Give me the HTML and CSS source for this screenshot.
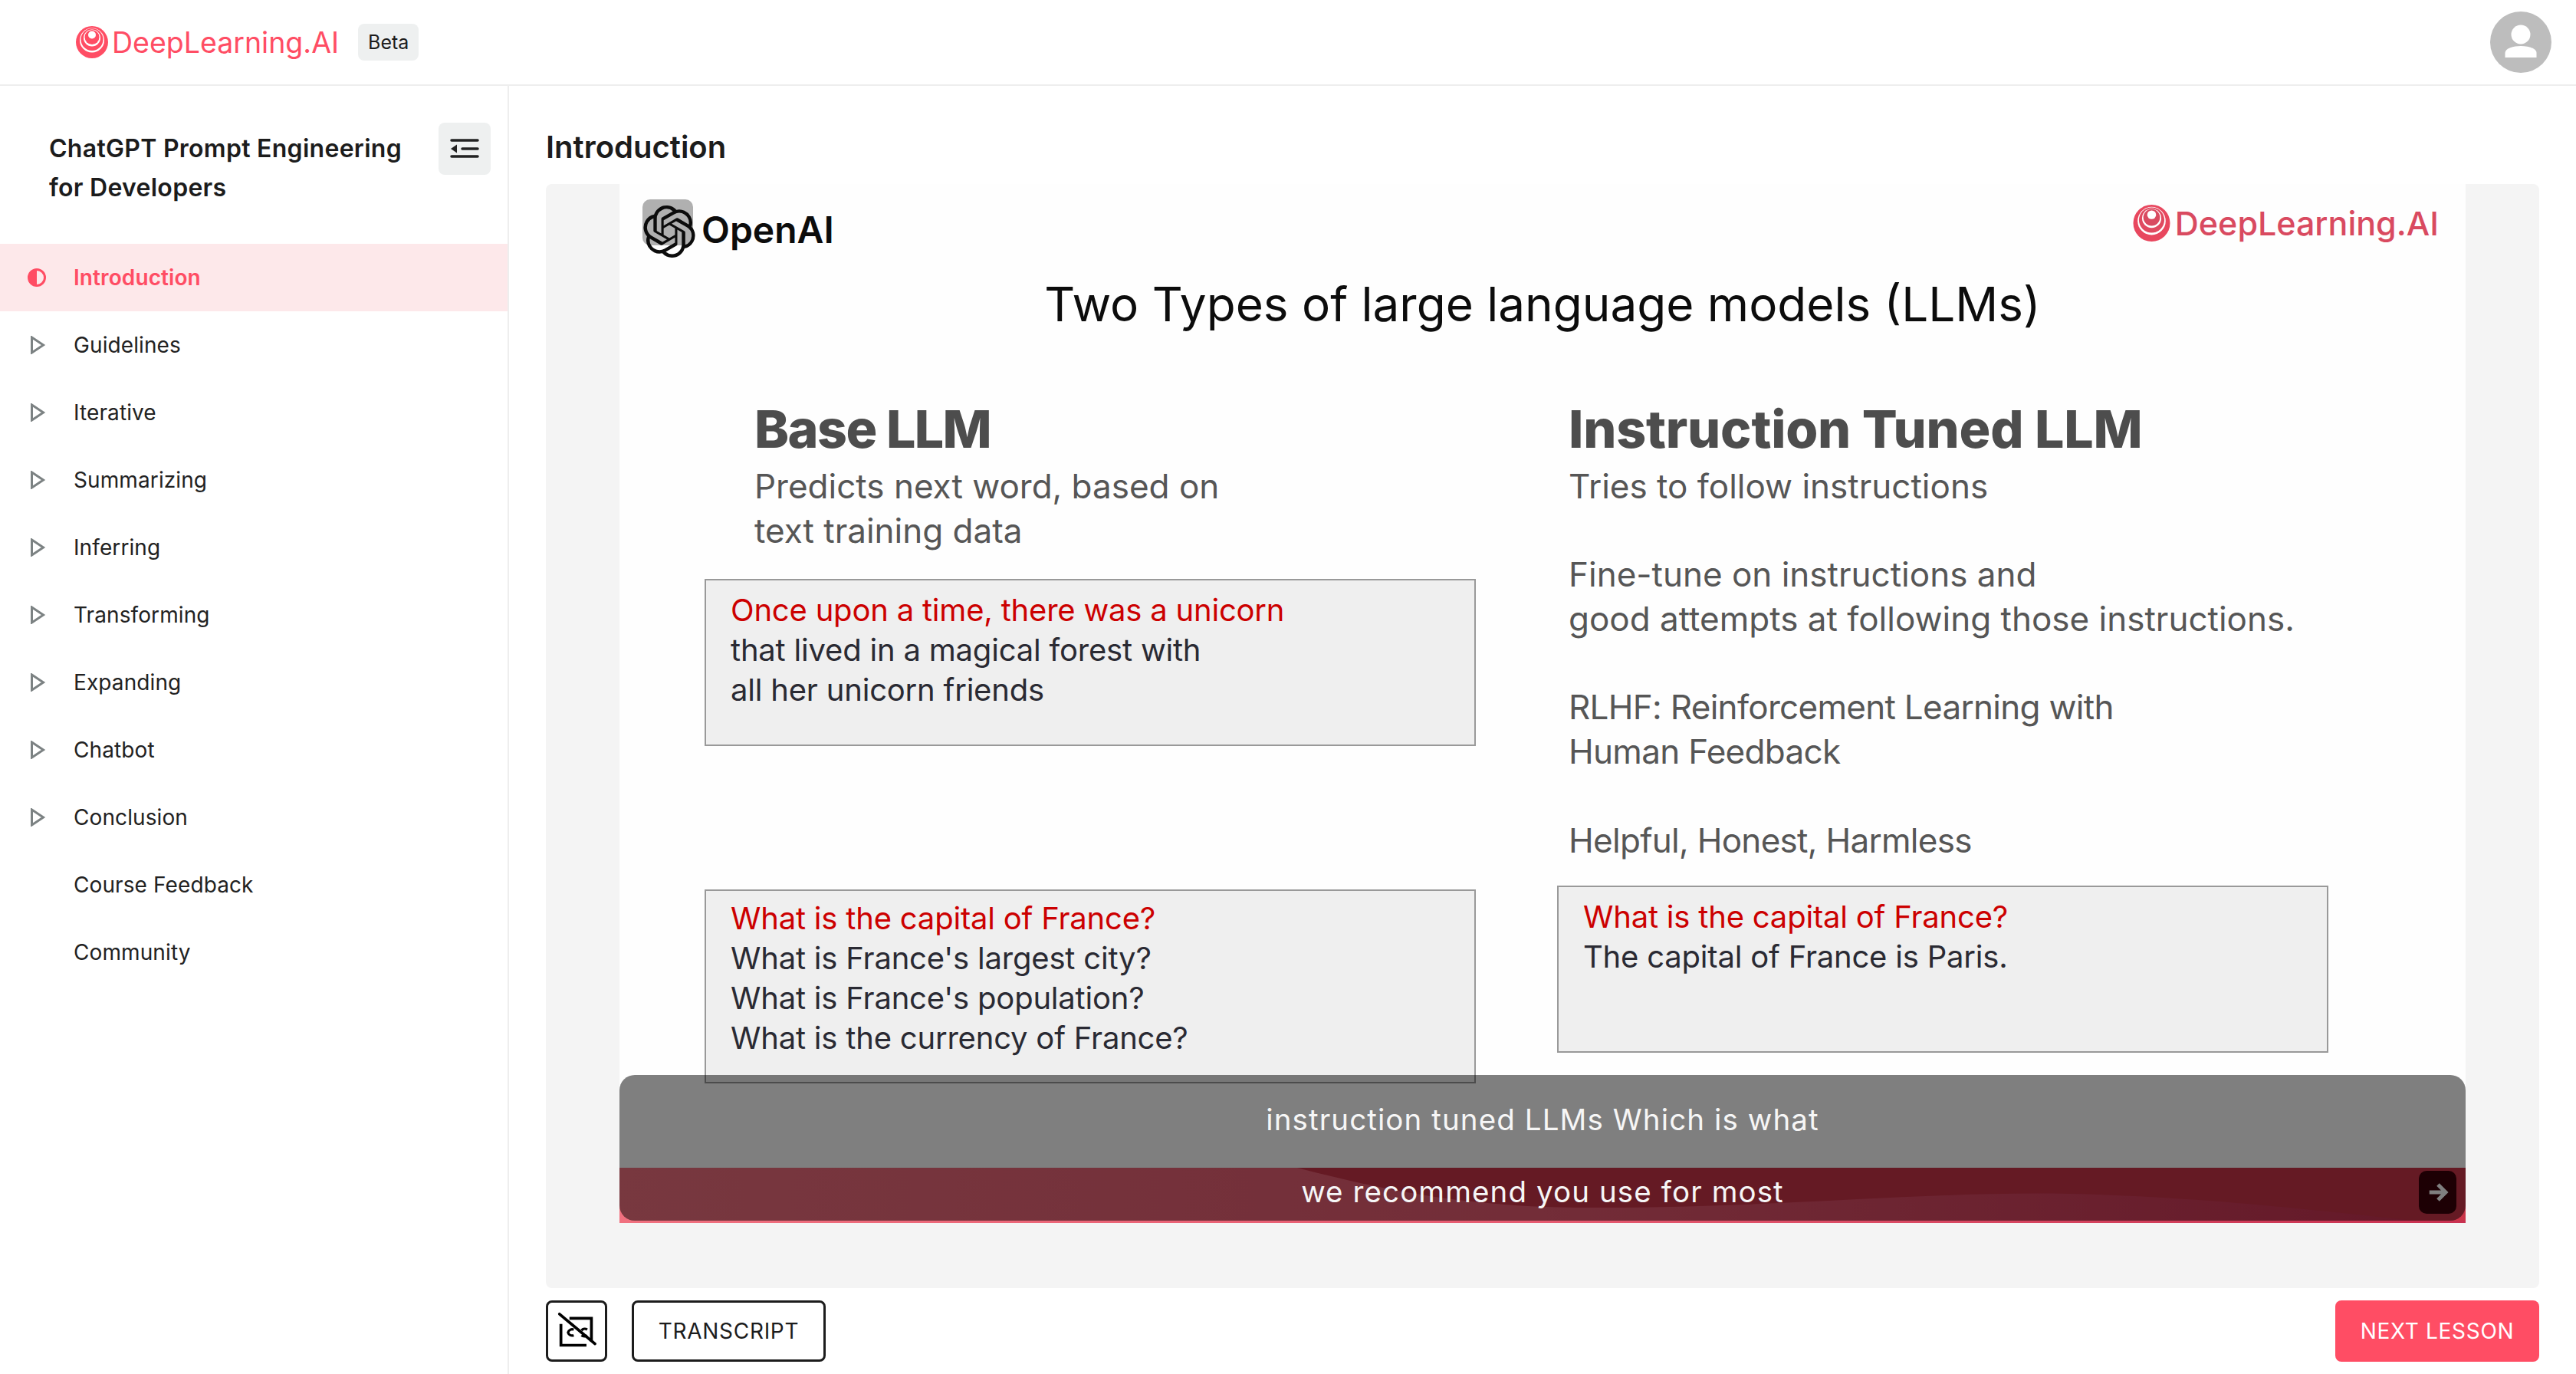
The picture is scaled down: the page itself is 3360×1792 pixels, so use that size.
FILE: index.html
```html
<!DOCTYPE html>
<html lang="en">
<head>
  <meta charset="UTF-8" />
  <title>ChatGPT Prompt Engineering for Developers</title>
  <link rel="stylesheet" href="styles.css">
</head>
<body>
  <header class="top-bar">
    <div class="brand">
      <svg class="brand-mark" viewBox="0 0 42 42">
        <circle cx="21" cy="21" r="21" fill="#ff4d64"/>
        <circle cx="21" cy="18.5" r="16" fill="#fff"/>
        <circle cx="21" cy="17.5" r="14.5" fill="#ff4d64"/>
        <circle cx="21" cy="15.5" r="11" fill="#fff"/>
        <circle cx="21" cy="14.5" r="9.5" fill="#ff4d64"/>
        <circle cx="21" cy="11.5" r="5" fill="#fff"/>
      </svg>
      <span class="brand-name">DeepLearning.AI</span>
      <span class="beta">Beta</span>
    </div>
    <div class="avatar">
      <svg viewBox="0 0 80 80" width="80" height="80">
        <circle cx="40" cy="30" r="12.5" fill="#fff"/>
        <path d="M19.500 60v-6c0-6 11-9 20.500-9s20.500 3 20.500 9v6z" fill="#fff"/>
      </svg>
    </div>
  </header>

  <div class="main">
    <aside class="sidebar">
      <div class="sidebar-head">
        <h2 class="course-title">ChatGPT Prompt Engineering for Developers</h2>
        <button class="toggle">
          <svg viewBox="0 0 68 68" width="68" height="68">
            <path d="M17 23h34M31 34h20M17 44h34" stroke="#222" stroke-width="3.500" stroke-linecap="round"/>
            <path d="M16 34l8-5.500v11z" fill="#222"/>
          </svg>
        </button>
      </div>
      <nav class="lessons">
        <a class="lesson active">
          <svg class="lesson-icon" viewBox="0 0 24 24">
            <circle cx="12" cy="12" r="10.500" fill="none" stroke="#ff4d64" stroke-width="3"/>
            <path d="M12 1.500a10.500 10.500 0 0 0 0 21z" fill="#ff4d64"/>
          </svg>
          Introduction
        </a>
        <a class="lesson"><svg class="lesson-icon" viewBox="0 0 24 24"><path d="M5.500 2l15 10-15 10z" class="play"/></svg>Guidelines</a>
        <a class="lesson"><svg class="lesson-icon" viewBox="0 0 24 24"><path d="M5.500 2l15 10-15 10z" class="play"/></svg>Iterative</a>
        <a class="lesson"><svg class="lesson-icon" viewBox="0 0 24 24"><path d="M5.500 2l15 10-15 10z" class="play"/></svg>Summarizing</a>
        <a class="lesson"><svg class="lesson-icon" viewBox="0 0 24 24"><path d="M5.500 2l15 10-15 10z" class="play"/></svg>Inferring</a>
        <a class="lesson"><svg class="lesson-icon" viewBox="0 0 24 24"><path d="M5.500 2l15 10-15 10z" class="play"/></svg>Transforming</a>
        <a class="lesson"><svg class="lesson-icon" viewBox="0 0 24 24"><path d="M5.500 2l15 10-15 10z" class="play"/></svg>Expanding</a>
        <a class="lesson"><svg class="lesson-icon" viewBox="0 0 24 24"><path d="M5.500 2l15 10-15 10z" class="play"/></svg>Chatbot</a>
        <a class="lesson"><svg class="lesson-icon" viewBox="0 0 24 24"><path d="M5.500 2l15 10-15 10z" class="play"/></svg>Conclusion</a>
        <a class="lesson"><span class="lesson-icon"></span>Course Feedback</a>
        <a class="lesson"><span class="lesson-icon"></span>Community</a>
      </nav>
    </aside>

    <section class="content">
      <h1 class="page-title">Introduction</h1>

      <div class="player">
        <div class="slide">
          <div class="slide-logos">
            <div class="openai">
              <div class="openai-mark">
                <svg viewBox="0 0 24 24" width="68" height="68">
                  <path fill="#0c0c0c" d="M22.2819 9.8211a5.9847 5.9847 0 0 0-.5157-4.9108 6.0462 6.0462 0 0 0-6.5098-2.9A6.0651 6.0651 0 0 0 4.9807 4.1818a5.9847 5.9847 0 0 0-3.9977 2.9 6.0462 6.0462 0 0 0 .7427 7.0966 5.98 5.98 0 0 0 .511 4.9107 6.051 6.051 0 0 0 6.5146 2.9001A5.9847 5.9847 0 0 0 13.2599 24a6.0557 6.0557 0 0 0 5.7718-4.2058 5.9894 5.9894 0 0 0 3.9977-2.9001 6.0557 6.0557 0 0 0-.7475-7.0729zm-9.022 12.6081a4.4755 4.4755 0 0 1-2.8764-1.0408l.1419-.0804 4.7783-2.7582a.7948.7948 0 0 0 .3927-.6813v-6.7369l2.02 1.1686a.071.071 0 0 1 .038.052v5.5826a4.504 4.504 0 0 1-4.4945 4.4944zm-9.6607-4.1254a4.4708 4.4708 0 0 1-.5346-3.0137l.142.0852 4.783 2.7582a.7712.7712 0 0 0 .7806 0l5.8428-3.3685v2.3324a.0804.0804 0 0 1-.0332.0615L9.74 19.9502a4.4992 4.4992 0 0 1-6.1408-1.6464zM2.3408 7.8956a4.485 4.485 0 0 1 2.3655-1.9728V11.6a.7664.7664 0 0 0 .3879.6765l5.8144 3.3543-2.0201 1.1685a.0757.0757 0 0 1-.071 0l-4.8303-2.7865A4.504 4.504 0 0 1 2.3408 7.872zm16.5963 3.8558L13.1038 8.364 15.1192 7.2a.0757.0757 0 0 1 .071 0l4.8303 2.7913a4.4944 4.4944 0 0 1-.6765 8.1042v-5.6772a.79.79 0 0 0-.407-.667zm2.0107-3.0231l-.142-.0852-4.7735-2.7818a.7759.7759 0 0 0-.7854 0L9.409 9.2297V6.8974a.0662.0662 0 0 1 .0284-.0615l4.8303-2.7866a4.4992 4.4992 0 0 1 6.6802 4.66zM8.3065 12.863l-2.02-1.1638a.0804.0804 0 0 1-.038-.0567V6.0742a4.4992 4.4992 0 0 1 7.3757-3.4537l-.142.0805L8.704 5.459a.7948.7948 0 0 0-.3927.6813zm1.0976-2.3654l2.602-1.4998 2.6069 1.4998v2.9994l-2.5974 1.4997-2.6067-1.4997Z"/>
                </svg>
              </div>
              <span class="openai-name">OpenAI</span>
            </div>
            <div class="slide-brand">
              <svg class="slide-brand-mark" viewBox="0 0 42 42">
                <circle cx="21" cy="21" r="21" fill="#e8475e"/>
                <circle cx="21" cy="18.5" r="16" fill="#fff"/>
                <circle cx="21" cy="17.5" r="14.5" fill="#e04a60"/>
                <circle cx="21" cy="15.5" r="11" fill="#fff"/>
                <circle cx="21" cy="14.5" r="9.5" fill="#d94a60"/>
                <circle cx="21" cy="11.5" r="5" fill="#fff"/>
              </svg>
              <span class="slide-brand-name">DeepLearning.AI</span>
            </div>
          </div>

          <h3 class="slide-title">Two Types of large language models (LLMs)</h3>

          <div class="slide-columns">
            <div class="slide-col">
              <h4 class="col-title col-title-base col-indent-base">Base LLM</h4>
              <p class="col-text col-indent-base">Predicts next word, based on<br>text training data</p>
              <div class="example example-unicorn">
                <span class="prompt">Once upon a time, there was a unicorn</span><br>
                that lived in a magical forest with<br>
                all her unicorn friends
              </div>
              <div class="example example-france">
                <span class="prompt">What is the capital of France?</span><br>
                What is France's largest city?<br>
                What is France's population?<br>
                What is the currency of France?
              </div>
            </div>
            <div class="slide-col">
              <h4 class="col-title col-indent-tuned">Instruction Tuned LLM</h4>
              <p class="col-text col-indent-tuned">Tries to follow instructions</p>
              <p class="col-text col-indent-tuned col-gap">Fine-tune on instructions and<br>good attempts at following those instructions.</p>
              <p class="col-text col-indent-tuned col-gap col-tight">RLHF: Reinforcement Learning with<br>Human Feedback</p>
              <p class="col-text col-indent-tuned col-gap col-tight">Helpful, Honest, Harmless</p>
              <div class="example example-paris">
                <span class="prompt">What is the capital of France?</span><br>
                The capital of France is Paris.
              </div>
            </div>
          </div>

          <div class="slide-bar">
            <svg class="slide-wave" viewBox="0 0 2408 72" preserveAspectRatio="none">
              <path d="M884 0C1000 30 1100 50 1250 52C1500 54 1700 30 1892 34C2080 38 2250 60 2342 69L2408 69L2408 0Z" fill="#ca3448"/>
            </svg>
            <div class="slide-next">
              <svg viewBox="0 0 24 24" width="30" height="30">
                <path d="M3 12h17M12 4l8 8-8 8" fill="none" stroke="#fff" stroke-width="4"/>
              </svg>
            </div>
          </div>

          <div class="captions">
            <div class="caption-line">instruction tuned LLMs Which is what</div>
            <div class="caption-line">we recommend you use for most</div>
          </div>
        </div>
      </div>

      <div class="actions">
        <div class="actions-left">
          <button class="btn btn-icon">
            <svg viewBox="0 0 80 80" width="74" height="74">
              <path d="M30 22h31v33M18 30v30h36" fill="none" stroke="#000" stroke-width="4"/>
              <path d="M36 38a6 6 0 0 0-8 4a6 6 0 0 0 8 4M55 38a6 6 0 0 0-8 1M47 46a6 6 0 0 0 8 0" fill="none" stroke="#000" stroke-width="3.500"/>
              <path d="M16 16L66 58" stroke="#000" stroke-width="4" stroke-linecap="round"/>
            </svg>
          </button>
          <button class="btn btn-outline">TRANSCRIPT</button>
        </div>
        <button class="btn btn-primary">NEXT LESSON</button>
      </div>
    </section>
  </div>
</body>
</html>
```

FILE: styles.css
```css
html, body {
  height: 100%;
  margin: 0;
  padding: 0;
  overflow: hidden;
  background-color: #ffffff;
  font-family: "Inter", "Liberation Sans", sans-serif;
  color: #1c1c1c;
}

body {
  display: flex;
  flex-direction: column;
}

/* top bar */
.top-bar {
  height: 110px;
  flex: none;
  display: flex;
  align-items: center;
  justify-content: space-between;
  padding: 0 32px 0 99px;
  border-bottom: 2px solid #eeeeee;
}

.brand {
  display: flex;
  align-items: center;
}

.brand-mark {
  width: 42px;
  height: 42px;
}

.brand-name {
  margin-left: 5px;
  font-size: 37.500px;
  color: #ff4d64;
}

.beta {
  margin-left: 25px;
  padding: 0 13px;
  height: 48px;
  line-height: 48px;
  border-radius: 8px;
  background-color: #eef0f0;
  font-size: 25px;
}

.avatar {
  width: 80px;
  height: 80px;
  border-radius: 50%;
  background-color: #bdbdbd;
}

.main {
  flex: 1;
  display: flex;
  min-height: 0;
}

/* sidebar */
.sidebar {
  width: 662px;
  flex: none;
  border-right: 2px solid #eeeeee;
}

.sidebar-head {
  height: 158px;
  padding: 48px 22px 0 64px;
  display: flex;
  justify-content: space-between;
  align-items: flex-start;
}

.course-title {
  width: 470px;
  margin: 8px 0 0;
  font-size: 32px;
  font-weight: 600;
  letter-spacing: 0.280px;
  line-height: 51px;
}

.toggle {
  width: 68px;
  height: 68px;
  padding: 0;
  border: 0;
  border-radius: 8px;
  background-color: #eef0f0;
}

.toggle svg {
  display: block;
}

.lesson {
  height: 88px;
  padding-left: 36px;
  display: flex;
  align-items: center;
  gap: 36px;
  font-size: 28px;
  letter-spacing: 0.100px;
  color: #222222;
}

.lesson.active {
  background-color: #fde8ea;
  color: #ff4d64;
  font-weight: 600;
}

.lesson-icon {
  width: 24px;
  height: 24px;
  flex: none;
}

.play {
  fill: none;
  stroke: #7c8283;
  stroke-width: 3;
}

/* content */
.content {
  flex: 1;
  min-width: 0;
  padding: 48px 48px 16px;
  display: flex;
  flex-direction: column;
}

.page-title {
  margin: 0 0 17px;
  padding-top: 1px;
  font-size: 40px;
  font-weight: 600;
  line-height: 62px;
}

.player {
  height: 1440px;
  padding: 0 96px;
  border-radius: 8px;
  background-color: #f4f4f4;
}

.slide {
  position: relative;
  height: 1355px;
  overflow: hidden;
  background-color: #fefefe;
}

.slide-logos {
  height: 95px;
  padding: 20px 35px 0 30px;
  display: flex;
  justify-content: space-between;
  align-items: flex-start;
}

.openai {
  display: flex;
  align-items: flex-start;
}

.openai-mark {
  width: 66px;
  height: 60px;
  border-radius: 10px;
  background-color: #b0b0b0;
}

.openai-mark svg {
  display: block;
  margin: 8px 0 0 1px;
}

.openai-name {
  margin-left: 11px;
  font-size: 48px;
  font-weight: 600;
  line-height: 80px;
  color: #0c0c0c;
}

.slide-brand {
  display: flex;
  align-items: center;
  padding-top: 5px;
}

.slide-brand-mark {
  width: 49px;
  height: 48px;
}

.slide-brand-name {
  margin-left: 6px;
  font-size: 43px;
  font-weight: 500;
  color: #d94a60;
}

.slide-title {
  margin: 0;
  height: 85px;
  font-size: 62px;
  font-weight: 400;
  line-height: 84px;
  text-align: center;
  color: #0c0c0c;
}

.slide-columns {
  padding: 81px 0 0 111px;
  display: grid;
  grid-template-columns: 1006px 1006px;
  column-gap: 106px;
}

.col-title {
  margin: 0 0 9px;
  font-size: 68px;
  font-weight: 800;
  letter-spacing: -0.200px;
  line-height: 76px;
  color: #4d4d4d;
}

.col-title-base {
  letter-spacing: -1.600px;
}

.col-indent-base {
  margin-left: 65px;
}

.col-indent-tuned {
  margin-left: 15px;
}

.col-text {
  margin-top: 0;
  margin-bottom: 0;
  font-size: 44px;
  line-height: 57.700px;
  color: #565656;
}

.col-gap {
  margin-top: 57.700px;
}

.col-tight {
  letter-spacing: -0.700px;
}

.example {
  box-sizing: border-box;
  border: 2px solid #999999;
  padding: 13px 32px 0;
  background-color: #efefef;
  font-size: 40px;
  letter-spacing: -0.200px;
  line-height: 52px;
  color: #2a2a33;
}

.prompt {
  color: #cc0000;
}

.example-unicorn {
  height: 218px;
  margin-top: 34px;
}

.example-france {
  height: 253px;
  margin-top: 187px;
  padding-top: 10px;
}

.example-paris {
  height: 218px;
  margin-top: 30px;
}

/* video overlays */
.slide-bar {
  position: absolute;
  left: 0;
  right: 0;
  bottom: 0;
  height: 72px;
  background: linear-gradient(90deg, #f0707f 0%, #e65a70 50%, #c83050 100%);
}

.slide-wave {
  position: absolute;
  left: 0;
  top: 0;
  width: 100%;
  height: 100%;
}

.slide-next {
  position: absolute;
  top: 4px;
  right: 12px;
  width: 49px;
  height: 56px;
  border-radius: 10px;
  background-color: #3a0008;
  display: flex;
  justify-content: center;
  align-items: center;
}

.captions {
  position: absolute;
  left: 0;
  right: 0;
  bottom: 3px;
  height: 190px;
  padding-top: 11px;
  box-sizing: border-box;
  border-radius: 20px;
  background-color: rgba(0, 0, 0, 0.5);
  color: #f6f6f6;
  text-align: center;
  font-size: 38.500px;
  letter-spacing: 1.100px;
  line-height: 94px;
}

/* bottom actions */
.actions {
  margin-top: 16px;
  display: flex;
  justify-content: space-between;
}

.actions-left {
  display: flex;
  gap: 32px;
}

.btn {
  box-sizing: border-box;
  height: 80px;
  padding: 0;
  border-radius: 8px;
  font-family: inherit;
  font-size: 28px;
  letter-spacing: 0.700px;
}

.btn-icon {
  width: 80px;
  border: 3px solid #1c1c1c;
  background-color: #ffffff;
  display: flex;
  justify-content: center;
  align-items: center;
}

.btn-outline {
  width: 253px;
  border: 3px solid #1c1c1c;
  background-color: #ffffff;
  color: #1c1c1c;
}

.btn-primary {
  width: 266px;
  border: 0;
  background-color: #ff4d64;
  color: #ffffff;
}
```
